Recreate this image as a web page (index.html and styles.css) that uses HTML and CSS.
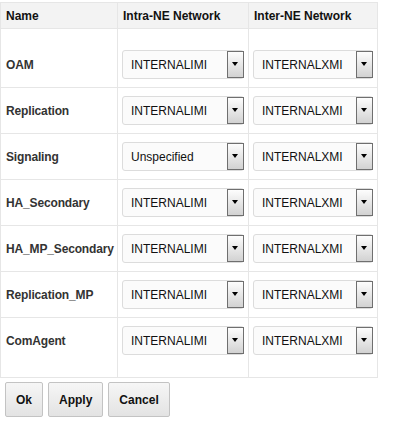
FILE: index.html
```html
<!DOCTYPE html>
<html>
<head>
<meta charset="utf-8">
<link rel="stylesheet" href="styles.css">
</head>
<body>
<table class="grid">
  <thead>
    <tr><th class="c1">Name</th><th class="c2">Intra-NE Network</th><th class="c3">Inter-NE Network</th></tr>
  </thead>
  <tbody>
    <tr class="first"><td class="name">OAM</td><td><div class="sel"><span>INTERNALIMI</span><i class="btn"></i></div></td><td><div class="sel"><span>INTERNALXMI</span><i class="btn"></i></div></td></tr>
    <tr><td class="name">Replication</td><td><div class="sel"><span>INTERNALIMI</span><i class="btn"></i></div></td><td><div class="sel"><span>INTERNALXMI</span><i class="btn"></i></div></td></tr>
    <tr><td class="name">Signaling</td><td><div class="sel"><span>Unspecified</span><i class="btn"></i></div></td><td><div class="sel"><span>INTERNALXMI</span><i class="btn"></i></div></td></tr>
    <tr><td class="name">HA_Secondary</td><td><div class="sel"><span>INTERNALIMI</span><i class="btn"></i></div></td><td><div class="sel"><span>INTERNALXMI</span><i class="btn"></i></div></td></tr>
    <tr><td class="name">HA_MP_Secondary</td><td><div class="sel"><span>INTERNALIMI</span><i class="btn"></i></div></td><td><div class="sel"><span>INTERNALXMI</span><i class="btn"></i></div></td></tr>
    <tr><td class="name">Replication_MP</td><td><div class="sel"><span>INTERNALIMI</span><i class="btn"></i></div></td><td><div class="sel"><span>INTERNALXMI</span><i class="btn"></i></div></td></tr>
    <tr class="last"><td class="name">ComAgent</td><td><div class="sel"><span>INTERNALIMI</span><i class="btn"></i></div></td><td><div class="sel"><span>INTERNALXMI</span><i class="btn"></i></div></td></tr>
  </tbody>
</table>
<div class="actions">
  <button class="b">Ok</button>
  <button class="b">Apply</button>
  <button class="b">Cancel</button>
</div>
</body>
</html>
```
FILE: styles.css
```css
html, body {
  margin: 0;
  padding: 0;
  background: #ffffff;
  font-family: "Liberation Sans", Arial, sans-serif;
}
.grid {
  border-collapse: collapse;
  margin-top: 2px;
  table-layout: fixed;
  width: 378px;
}
.grid th, .grid td {
  border: 1px solid #e6e6e6;
  padding: 0;
}
.grid th {
  background: #f3f3f3;
  height: 25px;
  text-align: left;
  font-size: 12px;
  font-weight: bold;
  color: #111;
  padding-left: 5px;
}
.c1 { width: 111px; }
.c2 { width: 125px; }
.c3 { width: 123px; }
.grid td {
  padding: 8px 4px 8px 4px;
  vertical-align: middle;
}
.grid td.name {
  padding-left: 5px;
  font-size: 12px;
  font-weight: bold;
  color: #333;
  letter-spacing: -0.15px;
}
.grid tr.first td { padding-top: 21px; }
.grid tr.last td { padding-bottom: 22px; }
.sel {
  position: relative;
  height: 27px;
  border: 1px solid #dcdcdc;
  border-radius: 3px;
  background: #fbfbfb;
  display: flex;
  align-items: center;
  padding-left: 8px;
  font-size: 12px;
  color: #111;
}
.btn {
  position: absolute;
  right: -1px;
  top: 0;
  width: 15px;
  height: 25px;
  border: 1px solid #6f6f6f;
  background: linear-gradient(#fdfdfd, #d2d2d2);
}
.btn::after {
  content: "";
  position: absolute;
  left: 4px;
  top: 10px;
  border-left: 3.5px solid transparent;
  border-right: 3.5px solid transparent;
  border-top: 4px solid #000;
}
.actions {
  display: flex;
  gap: 5px;
  padding: 4px 0 0 5px;
}
.b {
  height: 35px;
  padding: 0 10px;
  border: 1px solid #c3c3c3;
  border-radius: 2px;
  background: linear-gradient(#f6f6f6, #e3e3e3);
  font-family: "Liberation Sans", Arial, sans-serif;
  font-size: 12px;
  font-weight: bold;
  color: #111;
}
```
